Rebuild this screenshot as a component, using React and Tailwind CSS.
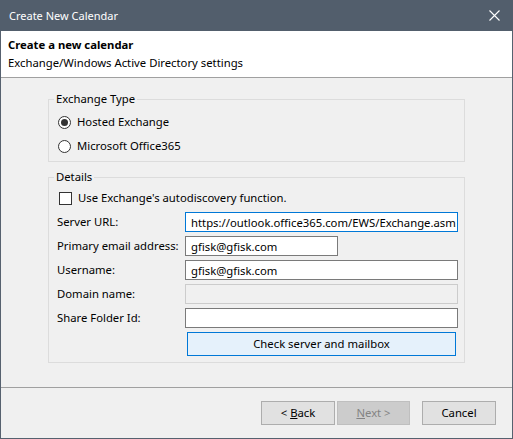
import React from "react";

const font = { fontFamily: '"Noto Sans", "Open Sans", sans-serif' };

function Radio({ checked, label }) {
  return (
    <div className="flex h-[24px] items-center">
      <span className="ml-[4px] flex h-[13px] w-[13px] items-center justify-center rounded-full border border-[#333333] bg-white">
        {checked && <span className="h-[7px] w-[7px] rounded-full bg-[#333333]" />}
      </span>
      <span className="ml-[6px]">{label}</span>
    </div>
  );
}

function Row({ label, children }) {
  return (
    <div className="flex h-[20px] items-center">
      <span className="w-[131px] shrink-0 whitespace-nowrap pl-[3px]">{label}</span>
      {children}
    </div>
  );
}

function Input({ value = "", w = "w-[273px]", focus, disabled }) {
  const cls = disabled
    ? "border-[#cccccc] bg-[#f0f0f0]"
    : focus
    ? "border-[#0078d7] bg-white"
    : "border-[#7a7a7a] bg-white";
  return (
    <input
      readOnly
      value={value}
      disabled={disabled}
      className={`h-[20px] ${w} border ${cls} pl-[5px] pr-[1px] text-[11.3px] text-black outline-none`}
      style={font}
    />
  );
}

export default function App() {
  return (
    <div
      className="flex h-[439px] w-[513px] flex-col border-x border-b border-[#56616f] bg-[#f0f0f0] text-[11.3px] leading-[16px] text-black"
      style={font}
    >
      {/* title bar */}
      <div className="-mx-px flex h-[31px] shrink-0 items-center justify-between bg-[#525e6c] pl-[9px] pr-[12px] text-[11px] text-white">
        <span>Create New Calendar</span>
        <svg width="11" height="11" viewBox="0 0 11 11" className="mr-[1px]">
          <path d="M0.5 0.5 L10.5 10.5 M10.5 0.5 L0.5 10.5" stroke="white" strokeWidth="1.1" fill="none" />
        </svg>
      </div>

      {/* header */}
      <div className="flex h-[47px] shrink-0 flex-col justify-center border-b border-[#a0a0a0] bg-white pl-[7px] leading-[18px]">
        <span className="font-bold">Create a new calendar</span>
        <span>Exchange/Windows Active Directory settings</span>
      </div>

      {/* body */}
      <div className="flex flex-1 flex-col px-[47px]">
        <fieldset className="mt-[13px] border border-[#dcdcdc] px-[5px] pb-[3px] pt-[3px]">
          <legend className="px-[2px] leading-[16px]">Exchange Type</legend>
          <Radio checked label="Hosted Exchange" />
          <Radio label="Microsoft Office365" />
        </fieldset>

        <fieldset className="mt-[7px] flex flex-col gap-[4px] border border-[#dcdcdc] pb-[6px] pl-[5px] pr-[6px] pt-[3px]">
          <legend className="px-[2px] leading-[16px]">Details</legend>
          <div className="flex h-[20px] items-center">
            <span className="ml-[5px] h-[13px] w-[13px] border border-[#333333] bg-white" />
            <span className="ml-[6px]">Use Exchange&apos;s autodiscovery function.</span>
          </div>
          <Row label="Server URL:">
            <Input focus value="https://outlook.office365.com/EWS/Exchange.asmx" />
          </Row>
          <Row label="Primary email address:">
            <Input w="w-[153px]" value="gfisk@gfisk.com" />
          </Row>
          <Row label="Username:">
            <Input value="gfisk@gfisk.com" />
          </Row>
          <Row label="Domain name:">
            <Input disabled />
          </Row>
          <Row label="Share Folder Id:">
            <Input />
          </Row>
          <div className="flex h-[24px]">
            <div className="w-[133px] shrink-0" />
            <button className="h-[24px] w-[269px] border border-[#0078d7] bg-[#e5f1fb] text-[11.3px]" style={font}>
              Check server and mailbox
            </button>
          </div>
        </fieldset>
      </div>

      {/* footer */}
      <div className="flex h-[51px] shrink-0 items-start justify-end border-t border-[#a0a0a0] pr-[16px] pt-[13px]">
        <button className="h-[24px] w-[74px] border border-[#adadad] bg-[#e1e1e1] text-[11.3px]" style={font}>
          &lt; <span className="underline">B</span>ack
        </button>
        <button className="ml-[2px] h-[24px] w-[73px] border border-[#bfbfbf] bg-[#cccccc] text-[11.3px] text-[#838383]" style={font}>
          <span className="underline">N</span>ext &gt;
        </button>
        <button className="ml-[12px] h-[24px] w-[74px] border border-[#adadad] bg-[#e1e1e1] text-[11.3px]" style={font}>
          Cancel
        </button>
      </div>
    </div>
  );
}
